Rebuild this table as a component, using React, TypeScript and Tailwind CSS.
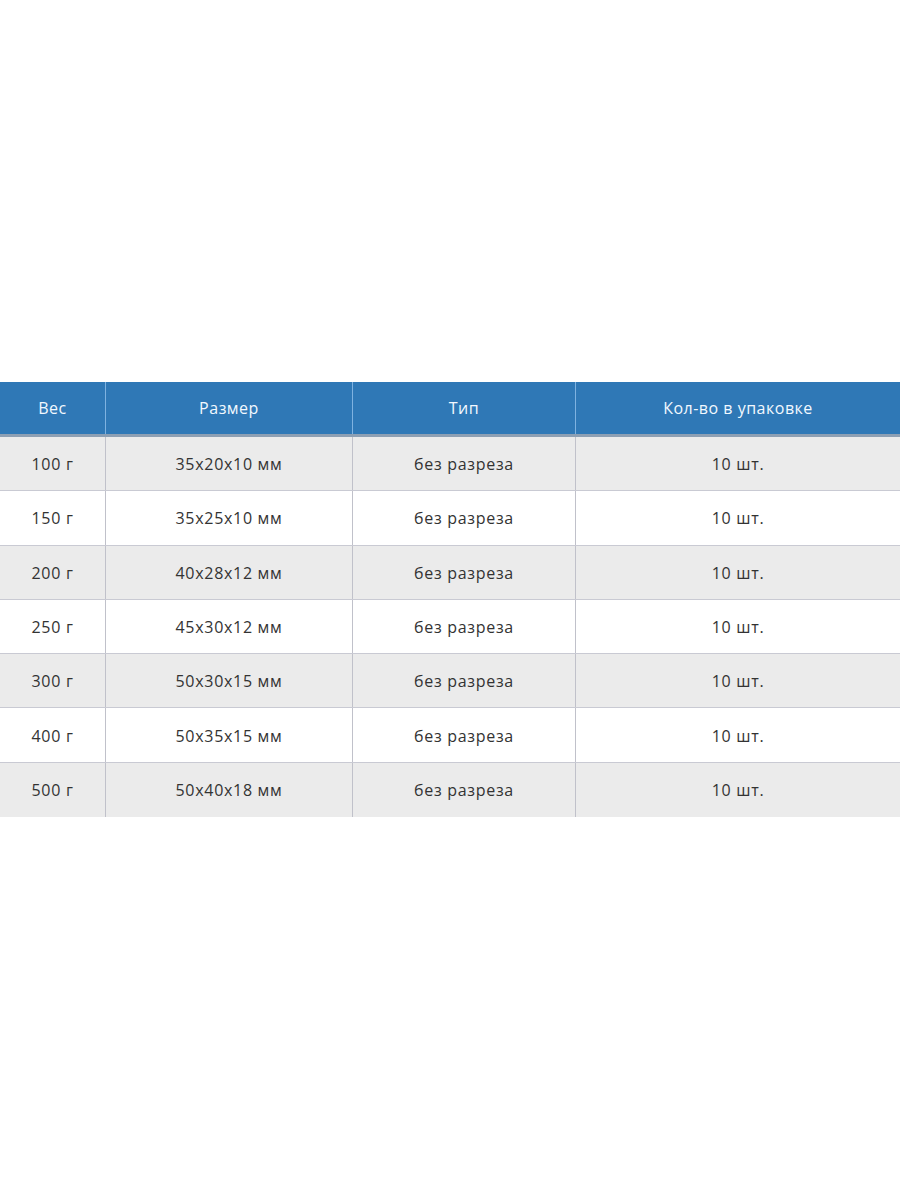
import React from "react";

const rows = [
  ["100 г", "35x20x10 мм", "без разреза", "10 шт."],
  ["150 г", "35x25x10 мм", "без разреза", "10 шт."],
  ["200 г", "40x28x12 мм", "без разреза", "10 шт."],
  ["250 г", "45x30x12 мм", "без разреза", "10 шт."],
  ["300 г", "50x30x15 мм", "без разреза", "10 шт."],
  ["400 г", "50x35x15 мм", "без разреза", "10 шт."],
  ["500 г", "50x40x18 мм", "без разреза", "10 шт."],
];

const cols = ["w-[106px]", "w-[247px]", "w-[223px]", "flex-1"];

export default function App() {
  return (
    <div
      className="w-[900px] h-[1200px] bg-white pt-[382px]"
      style={{ fontFamily: '"Open Sans", "Noto Sans", sans-serif' }}
    >
      <div className="flex h-[55px] bg-[#2f78b6] border-b-[3px] border-[#8d9fb3] text-[#f2f8ff] text-[16px] tracking-[0.5px]">
        {["Вес", "Размер", "Тип", "Кол-во в упаковке"].map((h, i) => (
          <div
            key={i}
            className={`${cols[i]} flex items-center justify-center ${
              i < 3 ? "border-r border-[#7fb2e0]" : ""
            }`}
          >
            {h}
          </div>
        ))}
      </div>
      {rows.map((r, ri) => (
        <div
          key={ri}
          className={`flex h-[54.3px] text-[#333333] text-[16px] tracking-[0.7px] ${
            ri % 2 === 0 ? "bg-[#ebebeb]" : "bg-white"
          } ${ri < rows.length - 1 ? "border-b border-[#c9cad3]" : ""}`}
        >
          {r.map((c, ci) => (
            <div
              key={ci}
              className={`${cols[ci]} flex items-center justify-center pt-[1px] ${
                ci < 3 ? "border-r border-[#c0c1ca]" : ""
              }`}
            >
              {c}
            </div>
          ))}
        </div>
      ))}
    </div>
  );
}
